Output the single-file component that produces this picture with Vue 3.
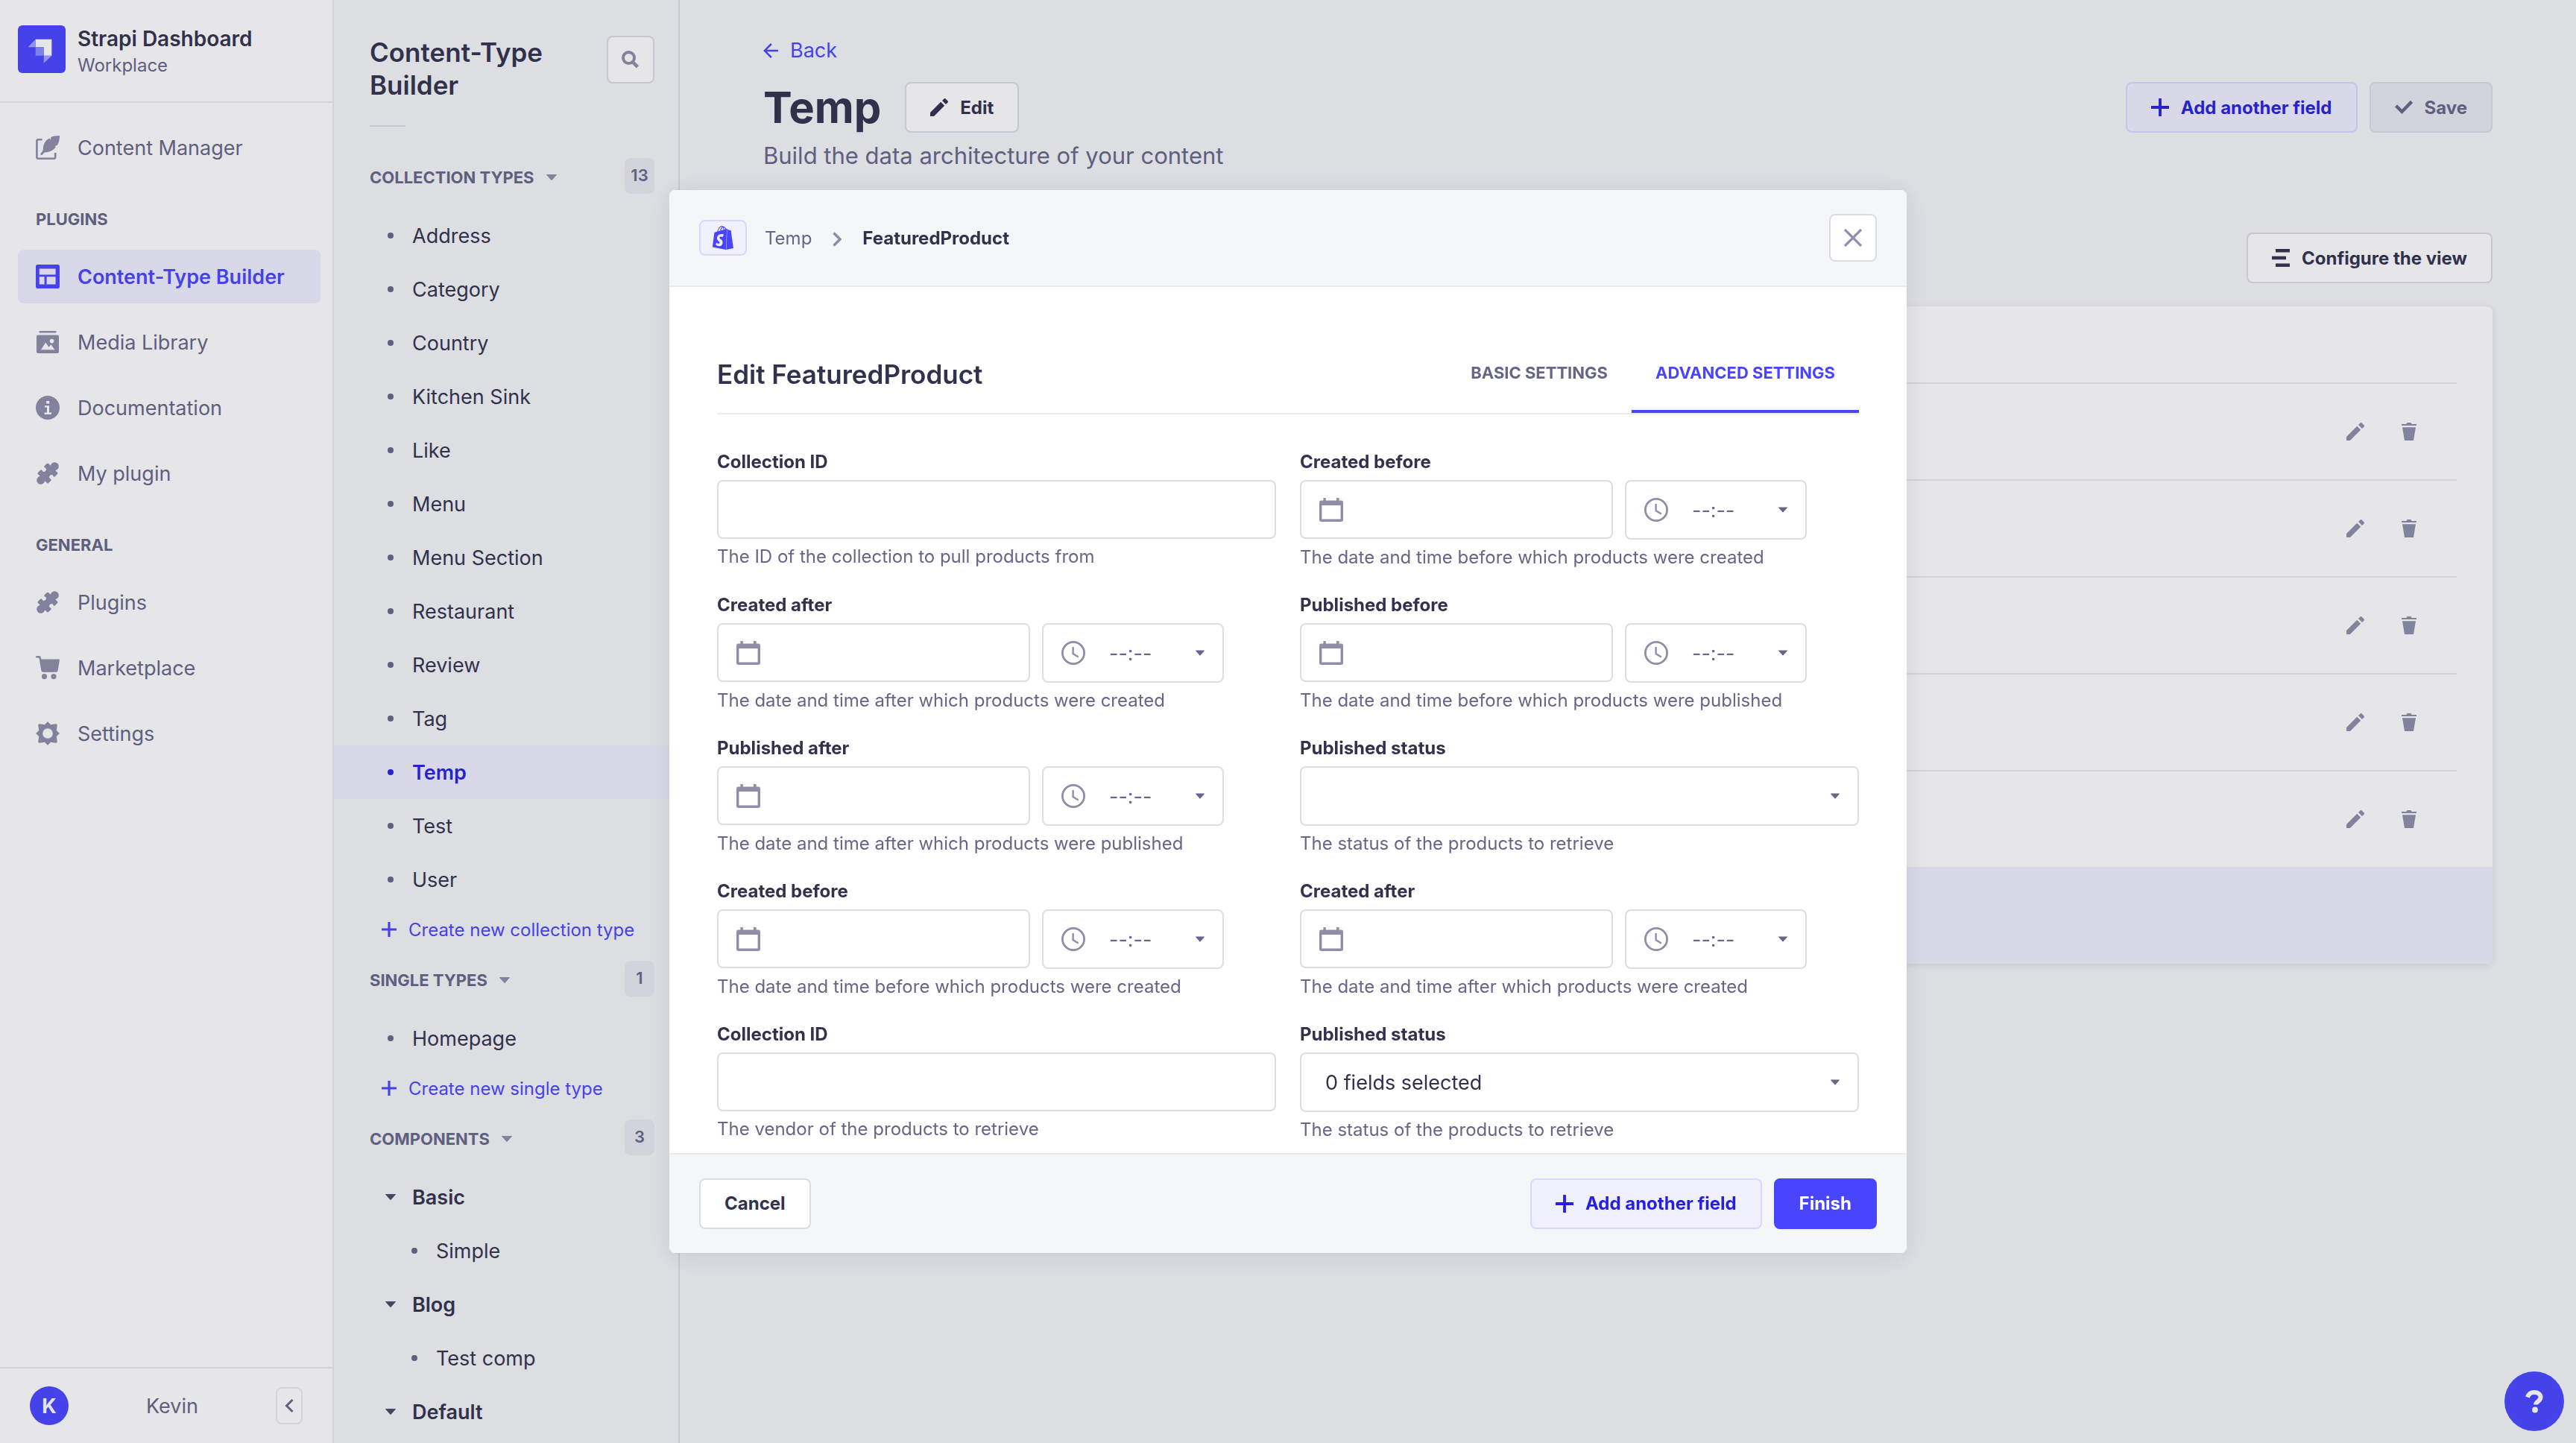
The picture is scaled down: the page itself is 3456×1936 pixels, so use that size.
<script setup>
import { ref } from 'vue'

const plugins = [
  { name: 'Content-Type Builder', icon: 'builder', active: true },
  { name: 'Media Library', icon: 'media' },
  { name: 'Documentation', icon: 'info' },
  { name: 'My plugin', icon: 'puzzle' }
]
const general = [
  { name: 'Plugins', icon: 'puzzle' },
  { name: 'Marketplace', icon: 'cart' },
  { name: 'Settings', icon: 'cog' }
]
const navSections = [
  { title: 'Plugins', links: plugins },
  { title: 'General', links: general }
]

const typeSections = [
  {
    title: 'Collection types',
    count: 13,
    links: ['Address', 'Category', 'Country', 'Kitchen Sink', 'Like', 'Menu', 'Menu Section', 'Restaurant', 'Review', 'Tag', 'Temp', 'Test', 'User'],
    create: 'Create new collection type'
  },
  { title: 'Single types', count: 1, links: ['Homepage'], create: 'Create new single type' }
]
const components = [
  { name: 'Basic', links: ['Simple'] },
  { name: 'Blog', links: ['Test comp'] },
  { name: 'Default', links: [] }
]

const fields = ref([
  { label: 'Collection ID', kind: 'text', hint: 'The ID of the collection to pull products from' },
  { label: 'Created before', kind: 'datetime', hint: 'The date and time before which products were created' },
  { label: 'Created after', kind: 'datetime', hint: 'The date and time after which products were created' },
  { label: 'Published before', kind: 'datetime', hint: 'The date and time before which products were published' },
  { label: 'Published after', kind: 'datetime', hint: 'The date and time after which products were published' },
  { label: 'Published status', kind: 'select', option: '', hint: 'The status of the products to retrieve' },
  { label: 'Created before', kind: 'datetime', hint: 'The date and time before which products were created' },
  { label: 'Created after', kind: 'datetime', hint: 'The date and time after which products were created' },
  { label: 'Collection ID', kind: 'text', hint: 'The vendor of the products to retrieve' },
  { label: 'Published status', kind: 'select', option: '0 fields selected', hint: 'The status of the products to retrieve' }
])
</script>

<template>
  <div class="app">
    <svg class="sprite" aria-hidden="true">
      <symbol id="plus" viewBox="0 0 24 24"><path d="M24 13.6a.3.3 0 01-.3.3h-9.8v9.8a.3.3 0 01-.3.3h-3.2a.3.3 0 01-.3-.3v-9.8H.3a.3.3 0 01-.3-.3v-3.2a.3.3 0 01.3-.3h9.8V.3a.3.3 0 01.3-.3h3.2a.3.3 0 01.3.3v9.8h9.8a.3.3 0 01.3.3v3.2z" /></symbol>
      <symbol id="pencil" viewBox="0 0 24 24"><path d="M23.604 3.514c.528.528.528 1.36 0 1.887l-2.622 2.607-4.99-4.99L18.6.396a1.322 1.322 0 011.887 0l3.118 3.118zM0 24v-4.99l14.2-14.2 4.99 4.99L4.99 24H0z" /></symbol>
      <symbol id="trash" viewBox="0 0 24 24"><path d="M3.236 6.149a.2.2 0 00-.197.233L6 24h12l2.96-17.618a.2.2 0 00-.196-.233H3.236zM21.8 1.983c.11 0 .2.09.2.2v1.584a.2.2 0 01-.2.2H2.2a.2.2 0 01-.2-.2V2.183c0-.11.09-.2.2-.2h5.511c.9 0 1.631-1.09 1.631-1.983h5.316c0 .894.73 1.983 1.631 1.983H21.8z" /></symbol>
      <symbol id="check" viewBox="0 0 24 24"><path d="M20.727 2.97a.2.2 0 01.286 0l2.85 2.89a.2.2 0 010 .28L9.554 20.854a.2.2 0 01-.285 0l-9.13-9.243a.2.2 0 010-.281l2.85-2.892a.2.2 0 01.284 0l6.14 6.209L20.726 2.97z" /></symbol>
      <symbol id="layout" viewBox="0 0 24 24"><path d="M5 0h19v4.6H5zM0 9.7h19v4.6H0zM5 19.4h19V24H5z" /></symbol>
      <symbol id="back" viewBox="0 0 24 24"><path d="M24 13.3a.2.2 0 01-.2.2H5.74l8.239 8.239a.2.2 0 010 .282L12.14 23.86a.2.2 0 01-.282 0L.14 12.14a.2.2 0 010-.282L11.86.14a.2.2 0 01.282 0L13.98 1.98a.2.2 0 010 .282L5.74 10.5H23.8c.11 0 .2.09.2.2v2.6z" /></symbol>
      <symbol id="caret" viewBox="0 0 14 8"><path d="M.6 0h12.8a.5.5 0 01.4.8L7.5 7.7a.7.7 0 01-1 0L.2.8A.5.5 0 01.6 0z" /></symbol>
      <symbol id="search" viewBox="0 0 24 24"><circle cx="9.5" cy="9.5" r="7.5" fill="none" stroke="currentColor" stroke-width="4" /><path d="M14.8 15.2L21.4 21.8" fill="none" stroke="currentColor" stroke-width="4.6" /></symbol>
      <symbol id="feather" viewBox="0 0 32 32">
        <path d="M8.5 5.2H3.4a2 2 0 00-2 2V28.7a2 2 0 002 2H24.2a2 2 0 002-2V23" fill="none" stroke="currentColor" stroke-width="2.6" />
        <path d="M32 0C26 .2 22.4.8 20.4 1.9L20 5.6 18.4 3.4C12 6.5 9.6 12.5 9.8 19L6 25.2 8.2 26.2 11.6 22.6C20 22.2 24.6 18.6 26.8 15.2L25.4 14.4 28.8 12.8C31.2 9 32 4.8 32 0z" />
      </symbol>
      <symbol id="builder" viewBox="0 0 32 32"><path fill-rule="evenodd" d="M2.2 0h27.6A2.2 2.2 0 0132 2.2v27.6a2.2 2.2 0 01-2.2 2.2H2.2A2.2 2.2 0 010 29.8V2.2A2.2 2.2 0 012.2 0zM4.8 5.6v7.8h21.8V5.6zM4.8 16.2v10.4h6.8V16.2zM14.6 16.2v10.4h12V16.2z" /></symbol>
      <symbol id="media" viewBox="0 0 32 32">
        <path fill-rule="evenodd" d="M4.6 1h22.8v2.4H4.6zM3 6.4h26a2 2 0 012 2V29a2 2 0 01-2 2H3a2 2 0 01-2-2V8.4a2 2 0 012-2zM7 26.2h18.4l-5-7-3 3.6-4.2-6.2zM21.6 11.8a2.8 2.8 0 100 5.6 2.8 2.8 0 000-5.6z" />
      </symbol>
      <symbol id="info" viewBox="0 0 32 32">
        <circle cx="16" cy="16" r="16" />
        <path d="M14.2 7h4v3.6h-4zM12 13.2h6v9.4h3v2.4h-9.4v-2.4h3.4v-7H12z" fill="#fff" />
      </symbol>
      <symbol id="puzzle" viewBox="0 0 32 32">
        <path transform="rotate(45 16 16)" stroke="currentColor" stroke-width="3" stroke-linejoin="round" d="M7.5 7.5H13.2C14.6 7.5 12 5.500 12 2.800A4 4 0 0120 2.800C20 5.500 17.400 7.500 18.800 7.500H24.500V12C21 10.500 18.800 13 18.800 16S21 21.500 24.500 20V24.500H18.800C17.400 24.500 20 26.500 20 29.200A4 4 0 0112 29.200C12 26.500 14.600 24.500 13.200 24.500H7.500V20C11 21.500 13.200 19 13.200 16S11 10.500 7.500 12z" />
      </symbol>
      <symbol id="cart" viewBox="0 0 32 32"><path d="M0 1.2A1.2 1.2 0 011.2 0H4.4A2.6 2.6 0 017 2.2L7.4 4.6H31.2A.9.9 0 0132 5.6L29.6 19.8A2.4 2.4 0 0127.2 21.8H9.8A2.4 2.4 0 017.4 19.8L4.6 3.6A1 1 0 003.6 2.6H1.2A1.2 1.2 0 010 1.2z" /><circle cx="11.5" cy="27.6" r="3.6" /><circle cx="24" cy="27.6" r="3.6" /></symbol>
      <symbol id="cog" viewBox="0 0 32 32"><path fill-rule="evenodd" d="M16 0L20 4.2 26.6 3.2A2 2 0 0128.8 5.4L27.8 12 32 16 27.8 20 28.8 26.6A2 2 0 0126.6 28.8L20 27.8 16 32 12 27.8 5.4 28.8A2 2 0 013.2 26.6L4.2 20 0 16 4.2 12 3.2 5.4A2 2 0 015.4 3.2L12 4.2zM16 9.2a6.8 6.8 0 100 13.6 6.8 6.8 0 000-13.6z" /></symbol>
      <symbol id="calendar" viewBox="0 0 32 32"><path fill-rule="evenodd" d="M5.4 0H8.8V3.6H23V0H26.6V3.6H29.6A2.4 2.4 0 0132 6V29.6A2.4 2.4 0 0129.6 32H2.4A2.4 2.4 0 010 29.6V6A2.4 2.4 0 012.4 3.6H5.4zM3.4 10V28.4H28.6V10z" /></symbol>
      <symbol id="clock" viewBox="0 0 32 32"><circle cx="16" cy="16" r="14.6" fill="none" stroke="currentColor" stroke-width="2.8" /><path d="M15.6 8V17L22.8 21.6" fill="none" stroke="currentColor" stroke-width="2.4" /></symbol>
      <symbol id="shopify" viewBox="0 0 24 24"><path d="M15.337 23.979l7.216-1.561s-2.604-17.613-2.625-17.73c-.018-.116-.114-.192-.211-.192s-1.929-.136-1.929-.136-1.275-1.274-1.439-1.411c-.045-.037-.075-.057-.121-.074l-.914 21.104h.023zM11.71 11.305s-.81-.424-1.774-.424c-1.447 0-1.504.906-1.504 1.141 0 1.232 3.24 1.715 3.24 4.629 0 2.295-1.44 3.76-3.406 3.76-2.354 0-3.54-1.465-3.54-1.465l.646-2.086s1.245 1.066 2.28 1.066c.675 0 .975-.545.975-.932 0-1.619-2.654-1.694-2.654-4.359-.034-2.237 1.571-4.416 4.827-4.416 1.257 0 1.875.361 1.875.361l-.945 2.715-.02.01zM11.17.83c.136 0 .271.038.405.135-.984.465-2.064 1.639-2.508 3.992-.656.213-1.293.405-1.889.578C7.697 3.75 8.951.84 11.17.84V.83zm1.235 2.949v.135c-.754.232-1.583.484-2.394.736.466-1.777 1.333-2.645 2.085-2.971.193.501.309 1.176.309 2.1zm.539-2.234c.694.074 1.141.867 1.429 1.755-.349.114-.735.231-1.158.366v-.252c0-.752-.096-1.371-.271-1.871v.002zm2.992 1.289c-.02 0-.06.021-.078.021s-.289.075-.714.21c-.423-1.233-1.176-2.37-2.508-2.37h-.115C12.135.209 11.669 0 11.265 0 8.159 0 6.675 3.877 6.21 5.846c-1.194.365-2.063.636-2.16.674-.675.213-.694.232-.772.87-.075.462-1.83 14.063-1.83 14.063L15.009 24l.927-21.166z" /></symbol>
    </svg>

    <nav class="sidebar" aria-label="Main">
      <div class="brand">
        <svg class="logo" viewBox="0 0 64 64">
          <rect width="64" height="64" rx="6" fill="#4945ff" />
          <path d="M23.7 18.7H45.3V40.7H34.7V29.3H23.7z" fill="#fff" />
          <path d="M23.7 29.3H34.7V40.7H23.7z" fill="#8e8bff" />
          <path d="M13.7 29.3L23.7 18.7V29.3zM34.7 40.7H45.3L34.7 50.7z" fill="#a5a3ff" />
        </svg>
        <div>
          <div class="brand-name">Strapi Dashboard</div>
          <div class="brand-sub">Workplace</div>
        </div>
      </div>
      <div class="nav-list">
        <a href="#" class="nav-link"><svg class="i32"><use href="#feather" /></svg>Content Manager</a>
        <template v-for="s in navSections" :key="s.title">
          <h2 class="nav-title">{{ s.title }}</h2>
          <div class="nav-group">
            <a v-for="l in s.links" :key="l.name" href="#" class="nav-link" :class="{ active: l.active }">
              <svg class="i32"><use :href="'#' + l.icon" /></svg>{{ l.name }}
            </a>
          </div>
        </template>
      </div>
      <div class="user">
        <span class="avatar">K</span>
        <span class="user-name">Kevin</span>
        <button class="collapse" aria-label="Collapse the navbar">
          <svg viewBox="0 0 12 20"><path d="M10.5 2L2.5 10L10.5 18" fill="none" stroke="currentColor" stroke-width="3" /></svg>
        </button>
      </div>
    </nav>

    <nav class="subnav" aria-label="Content-Type Builder">
      <div class="sub-head">
        <h2>Content-Type Builder</h2>
        <button class="square-btn" aria-label="Search"><svg class="i24"><use href="#search" /></svg></button>
      </div>
      <hr class="sub-rule" />
      <section v-for="s in typeSections" :key="s.title">
        <div class="sec-head">
          <button class="sec-title">{{ s.title }}<svg class="caret"><use href="#caret" /></svg></button>
          <span class="badge">{{ s.count }}</span>
        </div>
        <a v-for="l in s.links" :key="l" href="#" class="type-link" :class="{ active: l === 'Temp' }"><i class="dot"></i>{{ l }}</a>
        <a href="#" class="create"><svg class="i20"><use href="#plus" /></svg>{{ s.create }}</a>
      </section>
      <section>
        <div class="sec-head">
          <button class="sec-title">Components<svg class="caret"><use href="#caret" /></svg></button>
          <span class="badge">3</span>
        </div>
        <template v-for="c in components" :key="c.name">
          <button class="type-link group"><svg class="caret"><use href="#caret" /></svg>{{ c.name }}</button>
          <a v-for="l in c.links" :key="l" href="#" class="type-link nested"><i class="dot"></i>{{ l }}</a>
        </template>
      </section>
    </nav>

    <main class="main">
      <a href="#" class="back"><svg class="i20"><use href="#back" /></svg>Back</a>
      <div class="title-row">
        <h1>Temp</h1>
        <button class="btn"><svg class="i24"><use href="#pencil" /></svg>Edit</button>
        <div class="actions">
          <button class="btn secondary"><svg class="i24"><use href="#plus" /></svg>Add another field</button>
          <button class="btn disabled" disabled><svg class="i24"><use href="#check" /></svg>Save</button>
        </div>
      </div>
      <p class="subtitle">Build the data architecture of your content</p>
      <div class="config"><button class="btn"><svg class="i24"><use href="#layout" /></svg>Configure the view</button></div>
      <div class="card">
        <div class="table-pad">
          <table>
            <thead><tr><th aria-label="Fields"></th></tr></thead>
            <tbody>
              <tr v-for="n in 5" :key="n">
                <td>
                  <div class="row-actions">
                    <button aria-label="Edit field"><svg class="i24"><use href="#pencil" /></svg></button>
                    <button aria-label="Delete field"><svg class="i24"><use href="#trash" /></svg></button>
                  </div>
                </td>
              </tr>
            </tbody>
          </table>
        </div>
        <button class="card-foot" aria-label="Add another field to this collection type"></button>
      </div>
    </main>

    <button class="help" aria-label="Help">
      <svg viewBox="0 0 24 32"><path d="M3 10.5C4.5 5.8 8 4 12 4c5 0 8.5 2.6 8.5 6.6 0 5.6-6.5 5.6-6.5 9.9" fill="none" stroke="currentColor" stroke-width="6" /><circle cx="13" cy="27.5" r="3.9" /></svg>
    </button>

    <div class="overlay">
      <div class="modal" role="dialog" aria-modal="true" aria-labelledby="modal-title">
        <header class="modal-head">
          <span class="type-icon"><svg><use href="#shopify" /></svg></span>
          <span class="crumb">Temp</span>
          <svg class="chev" viewBox="0 0 12 20"><path d="M1.5 1.5L10 10L1.5 18.5" fill="none" stroke="currentColor" stroke-width="3.4" /></svg>
          <span class="crumb current">FeaturedProduct</span>
          <button class="square-btn close" aria-label="Close the modal">
            <svg class="i24" viewBox="0 0 24 24"><path d="M1 1L23 23M23 1L1 23" stroke="currentColor" stroke-width="3.2" /></svg>
          </button>
        </header>
        <div class="modal-body">
          <div class="tabs-row">
            <h2 id="modal-title">Edit FeaturedProduct</h2>
            <div class="tabs" role="tablist">
              <button role="tab" class="tab">Basic settings</button>
              <button role="tab" class="tab selected" aria-selected="true">Advanced settings</button>
            </div>
          </div>
          <form class="fields" @submit.prevent>
            <div v-for="(f, i) in fields" :key="i" class="field">
              <label :for="'field-' + i">{{ f.label }}</label>
              <input v-if="f.kind === 'text'" :id="'field-' + i" type="text" class="box" />
              <div v-else-if="f.kind === 'datetime'" class="datetime">
                <div class="box date">
                  <svg class="i32"><use href="#calendar" /></svg>
                  <input :id="'field-' + i" type="text" />
                </div>
                <div class="box time">
                  <svg class="i32"><use href="#clock" /></svg>
                  <select :aria-label="f.label + ' time'"><option>--:--</option></select>
                  <svg class="caret small"><use href="#caret" /></svg>
                </div>
              </div>
              <div v-else class="box choice">
                <select :id="'field-' + i"><option>{{ f.option }}</option></select>
                <svg class="caret small"><use href="#caret" /></svg>
              </div>
              <p class="hint">{{ f.hint }}</p>
            </div>
          </form>
        </div>
        <footer class="modal-foot">
          <button class="btn">Cancel</button>
          <div class="actions">
            <button class="btn secondary"><svg class="i24"><use href="#plus" /></svg>Add another field</button>
            <button class="btn primary">Finish</button>
          </div>
        </footer>
      </div>
    </div>
  </div>
</template>

<style>
body { background: #f5f6f8; }
</style>

<style scoped>
* { box-sizing: border-box; }
.app {
  display: flex;
  height: 100vh;
  overflow: hidden;
  background: #f5f6f8;
  color: #32324d;
  font-family: Inter, "Liberation Sans", sans-serif;
  font-size: 27px;
}
h1, h2, p { margin: 0; }
a { color: inherit; text-decoration: none; }
button, input, select { font: inherit; color: inherit; margin: 0; }
button { border: 0; background: none; padding: 0; }
svg { display: block; fill: currentColor; flex: none; }
.sprite { position: absolute; width: 0; height: 0; }
.i32 { width: 32px; height: 32px; }
.i24 { width: 24px; height: 24px; }
.i20 { width: 20px; height: 20px; }
.caret { width: 14px; height: 8px; }
.caret.small { width: 12px; height: 8px; color: #666687; pointer-events: none; }

/* Main navigation */
.sidebar {
  width: 448px;
  flex: none;
  display: flex;
  flex-direction: column;
  background: #fff;
  border-right: 2px solid #eaeaef;
  color: #666687;
}
.brand {
  display: flex;
  gap: 16px;
  height: 138px;
  padding: 34px 24px;
  border-bottom: 2px solid #eaeaef;
}
.logo { width: 64px; height: 64px; }
.brand-name { font-size: 28px; font-weight: 600; line-height: 36px; color: #32324d; }
.brand-sub { font-size: 24px; line-height: 36px; }
.nav-list { flex: 1; padding: 24px 16px 0 24px; }
.nav-group { display: flex; flex-direction: column; gap: 16px; }
.nav-link {
  display: flex;
  align-items: center;
  gap: 24px;
  height: 72px;
  padding: 0 24px;
  border-radius: 8px;
}
.nav-link svg { color: #8e8ea9; }
.nav-link.active { background: #f0f0ff; color: #4945ff; font-weight: 600; }
.nav-link.active svg { color: #4945ff; }
.nav-title {
  padding: 40px 24px 21px;
  font-size: 22px;
  line-height: 40px;
  font-weight: 700;
  text-transform: uppercase;
}
.user {
  display: flex;
  align-items: center;
  justify-content: space-between;
  height: 102px;
  padding: 0 40px;
  border-top: 2px solid #eaeaef;
}
.avatar {
  display: grid;
  place-items: center;
  width: 52px;
  height: 52px;
  border-radius: 50%;
  background: #4945ff;
  color: #fff;
  font-weight: 700;
}
.collapse {
  display: grid;
  place-items: center;
  width: 36px;
  height: 50px;
  border: 2px solid #eaeaef;
  border-radius: 8px;
}
.collapse svg { width: 12px; height: 20px; }

/* Content type navigation */
.subnav {
  width: 464px;
  flex: none;
  overflow: hidden;
  border-right: 2px solid #dcdce4;
}
.sub-head { display: flex; justify-content: space-between; padding: 48px 32px 0 48px; }
.sub-head h2 { width: 260px; font-size: 35px; line-height: 44px; font-weight: 600; }
.square-btn {
  display: grid;
  place-items: center;
  width: 64px;
  height: 64px;
  border: 2px solid #dcdce4;
  border-radius: 8px;
  background: #fff;
  color: #8e8ea9;
}
.sub-rule { width: 48px; height: 2px; margin: 32px 48px 42px; border: 0; background: #dcdce4; }
.sec-head {
  display: flex;
  align-items: center;
  justify-content: space-between;
  height: 48px;
  margin-bottom: 20px;
  padding: 0 32px 0 48px;
}
.sec-title {
  display: flex;
  align-items: center;
  gap: 16px;
  padding-top: 4px;
  font-size: 22px;
  font-weight: 700;
  text-transform: uppercase;
  color: #666687;
}
.sec-title .caret { color: #8e8ea9; }
.badge {
  min-width: 40px;
  padding: 0 8px;
  border-radius: 8px;
  background: #eaeaef;
  color: #666687;
  font-size: 22px;
  line-height: 46px;
  height: 48px;
  font-weight: 600;
  text-align: center;
}
.type-link {
  display: flex;
  align-items: center;
  gap: 25px;
  width: 100%;
  height: 72px;
  padding-left: 72px;
}
.type-link.nested { padding-left: 104px; }
.type-link.active { background: #f0f0ff; color: #271fe0; font-weight: 600; }
.type-link.group { gap: 22px; padding-left: 69px; font-weight: 600; text-align: left; }
.type-link.group .caret { color: #4a4a6a; }
.dot { width: 8px; height: 8px; border-radius: 50%; background: #666687; }
.active .dot { background: #271fe0; }
.create {
  display: flex;
  align-items: center;
  gap: 16px;
  height: 62px;
  margin-bottom: 11px;
  padding-left: 64px;
  font-size: 24px;
  color: #4945ff;
}

/* Page */
.main { flex: 1; min-width: 0; padding: 48px 112px; }
.back { display: flex; align-items: center; gap: 16px; line-height: 40px; color: #4945ff; }
.title-row { display: flex; align-items: center; margin-top: 22px; height: 68px; }
.title-row h1 { margin-right: 32px; font-size: 58px; line-height: 68px; font-weight: 700; }
.title-row .actions { margin-left: auto; }
.subtitle { margin-top: 11px; font-size: 31px; line-height: 40px; color: #666687; }
.actions { display: flex; gap: 16px; }
.btn {
  display: flex;
  align-items: center;
  gap: 16px;
  height: 68px;
  padding: 0 32px;
  border: 2px solid #dcdce4;
  border-radius: 8px;
  background: #fff;
  font-size: 24px;
  font-weight: 700;
  white-space: nowrap;
}
.btn.secondary { border-color: #d9d8ff; background: #f0f0ff; color: #271fe0; }
.btn.disabled { background: #eaeaef; color: #666687; }
.btn.primary { border-color: #4945ff; background: #4945ff; color: #fff; }
.config { display: flex; justify-content: flex-end; margin: 83px 0 31px; }
.card { border-radius: 8px; overflow: hidden; background: #fff; box-shadow: 0 2px 8px rgba(33, 33, 52, 0.1); }
.table-pad { padding: 0 48px; }
table { width: 100%; border-collapse: separate; border-spacing: 0; }
th { height: 104px; padding: 0; border-bottom: 2px solid #eaeaef; }
td { height: 130px; padding: 0 52px 0 0; border-bottom: 2px solid #eaeaef; }
tbody tr:last-child td { height: 128px; border-bottom: 0; }
.row-actions { display: flex; justify-content: flex-end; gap: 48px; color: #8e8ea9; }
.card-foot { display: block; width: 100%; height: 130px; background: #f0f0ff; }
.help {
  position: fixed;
  right: 16px;
  bottom: 16px;
  display: grid;
  place-items: center;
  width: 80px;
  height: 80px;
  border-radius: 50%;
  background: #4945ff;
  color: #fff;
}
.help svg { width: 24px; height: 32px; }

/* Modal */
.overlay {
  position: fixed;
  inset: 0;
  display: flex;
  align-items: center;
  justify-content: center;
  background: rgba(50, 52, 74, 0.12);
}
.modal {
  width: 1660px;
  max-width: 100%;
  overflow: hidden;
  border-radius: 8px;
  background: #fff;
  box-shadow: 0 4px 30px rgba(33, 33, 52, 0.1);
}
.modal-head {
  display: flex;
  align-items: center;
  padding: 32px 40px;
  border-bottom: 2px solid #eaeaef;
  background: #f5f6f8;
}
.type-icon {
  display: grid;
  place-items: center;
  width: 64px;
  height: 48px;
  margin-right: 24px;
  border: 2px solid #d9d8ff;
  border-radius: 8px;
  background: #f0f0ff;
  color: #4945ff;
}
.type-icon svg { width: 32px; height: 32px; }
.crumb { padding-top: 2px; font-size: 24px; line-height: 32px; color: #666687; }
.crumb.current { font-weight: 700; color: #32324d; }
.chev { width: 12px; height: 20px; margin: 4px 28px 0; color: #8e8ea9; }
.close { margin-left: auto; }
.modal-body { max-height: 60vh; padding: 64px; overflow-y: auto; scrollbar-width: none; }
.tabs-row {
  display: flex;
  justify-content: space-between;
  height: 107px;
  border-bottom: 2px solid #eaeaef;
}
.tabs-row h2 { font-size: 35px; line-height: 107px; font-weight: 600; }
.tabs { display: flex; }
.tab {
  padding: 0 32px;
  border-bottom: 4px solid transparent;
  font-size: 22px;
  font-weight: 700;
  text-transform: uppercase;
  color: #666687;
}
.tab.selected { border-color: #4945ff; color: #4945ff; }
.fields { display: grid; grid-template-columns: 1fr 1fr; gap: 32px; margin-top: 48px; }
.field { display: flex; flex-direction: column; gap: 8px; min-width: 0; }
.field label { font-size: 24px; line-height: 32px; font-weight: 700; }
.hint { font-size: 24px; line-height: 32px; color: #666687; }
.box {
  display: flex;
  align-items: center;
  width: 100%;
  height: 80px;
  border: 2px solid #dcdce4;
  border-radius: 8px;
  background: #fff;
}
.box > svg.i32 { color: #8e8ea9; }
.box input, .box select {
  flex: 1;
  min-width: 0;
  height: 100%;
  padding: 0;
  border: 0;
  background: transparent;
  appearance: none;
  outline: none;
}
input.box { height: 79px; padding: 0 30px; }
.datetime { display: flex; gap: 16px; }
.date { width: 420px; height: 79px; padding: 0 24px; gap: 24px; }
.time { width: 244px; padding: 0 24px; gap: 32px; color: #666687; }
.choice { padding: 0 24px 0 32px; }
.modal-foot {
  display: flex;
  justify-content: space-between;
  padding: 32px 40px;
  border-top: 2px solid #eaeaef;
  background: #f5f6f8;
}
</style>
